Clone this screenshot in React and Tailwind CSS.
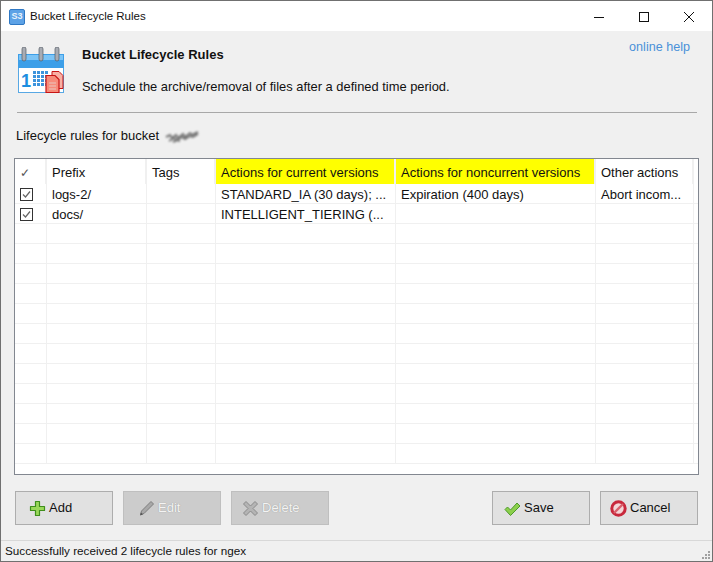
const font = { fontFamily: '"Liberation Sans", Arial, sans-serif' };

const cols = ["w-[32px]", "w-[100px]", "w-[69px]", "w-[180px]", "w-[200px]", "w-[98px]"];

const rows = [
  { prefix: "logs-2/", current: "STANDARD_IA (30 days); ...", noncurrent: "Expiration (400 days)", other: "Abort incom..." },
  { prefix: "docs/", current: "INTELLIGENT_TIERING (..." },
  ...Array(12).fill({ empty: true }),
];

const CalendarIcon = () => (
  <svg width="48" height="48" viewBox="0 0 48 48" className="shrink-0">
    <rect x="1.500" y="7.500" width="45" height="38" fill="#ffffff" stroke="#58a8e4" />
    <rect x="1" y="7" width="46" height="14" fill="#3d9fe8" />
    <rect x="2" y="8" width="44" height="5" fill="#7cc4f6" />
    {[7, 24, 40].map((x) => (
      <rect key={x} x={x - 2} y="0" width="4" height="14" rx="2" fill="#a8acb4" stroke="#555b66" strokeWidth="0.7" />
    ))}
    <text x="4" y="40" fontSize="18" fontWeight="700" fill="#1c8ee0" fontFamily="Liberation Sans">1</text>
    {[0, 1, 2, 3].map((r) =>
      [0, 1, 2, 3].map((c) => <rect key={`${r}${c}`} x={16 + c * 4} y={24 + r * 4} width="3" height="3" fill="#3d94dc" />)
    )}
    <path d="M35 24.500h7l4 4v13H35z" fill="#f8b0a4" stroke="#c81414" strokeWidth="1" />
    <path d="M29 28.500h9l4 4v13H29z" fill="#f78b7a" stroke="#c81414" strokeWidth="1.200" />
    <path d="M32 36h7M32 39h7M32 42h7" stroke="#e8c8c0" strokeWidth="1" />
  </svg>
);

const AppIcon = () => (
  <div className="flex h-[16px] w-[16px] items-center justify-center rounded-[2px] border border-[#2f78c4] bg-[#5da2e6] text-[9px] leading-none font-bold text-[#e8f2fc]">
    S3
  </div>
);

const PlusIcon = () => (
  <svg width="17" height="17" viewBox="0 0 17 17">
    <path d="M6.500 1.500h4v5h5v4h-5v5h-4v-5h-5v-4h5z" fill="#9ad85a" stroke="#3f8f1c" strokeWidth="1.200" strokeLinejoin="round" />
  </svg>
);

const PencilIcon = () => (
  <svg width="17" height="17" viewBox="0 0 17 17">
    <path d="M13 1.500l2.500 2.500-9.500 9.500-3.500 1 1-3.500z" fill="#a8a8a8" stroke="#7e7e7e" />
    <path d="M2 15.500l1-3 2 2z" fill="#555555" />
  </svg>
);

const CrossIcon = () => (
  <svg width="17" height="17" viewBox="0 0 17 17">
    <path d="M4 1.500l4.500 4.500L13 1.500 15.500 4 11 8.500l4.500 4.500-2.500 2.500L8.500 11 4 15.500 1.500 13 6 8.500 1.500 4z" fill="#b4b4b4" stroke="#8a8a8a" />
  </svg>
);

const CheckIcon = () => (
  <svg width="17" height="17" viewBox="0 0 17 17">
    <path d="M1 9.500l2.500-2.500 3 3L13 3l3 3-9.500 9.500z" fill="#8ccf4c" stroke="#4d9a2a" strokeWidth="1" />
  </svg>
);

const NoIcon = () => (
  <svg width="17" height="17" viewBox="0 0 17 17">
    <circle cx="8.500" cy="8.500" r="6.700" fill="#f4d6d8" stroke="#c8283c" strokeWidth="3" />
    <path d="M4 13l9-9" stroke="#d8606c" strokeWidth="2.400" />
  </svg>
);

const Checkbox = () => (
  <div className="mt-[-2px] flex h-[13px] w-[13px] items-center justify-center border border-[#333333] bg-white">
    <svg width="11" height="11" viewBox="0 0 11 11">
      <path d="M2 5.500l2.500 2.500L9 2.500" fill="none" stroke="#666666" strokeWidth="1.200" />
    </svg>
  </div>
);

const Button = ({ icon, label, disabled, inset }) => (
  <button
    className={`flex h-[34px] w-[98px] items-center border text-[13px] ${inset} ${
      disabled ? "border-[#bfbfbf] bg-[#cccccc] text-[#f4f4f4] [text-shadow:0_0_1px_#8a8a8a]" : "border-[#adadad] bg-[#e1e1e1] text-[#111111]"
    }`}
  >
    {icon}
    <span className="ml-[3px]">{label}</span>
  </button>
);

const HeaderCell = ({ width, yellow, last, children }) => (
  <div className={`flex h-[25px] shrink-0 items-center pt-[2px] pl-[5px] text-[13px] whitespace-nowrap ${width} ${yellow ? "bg-[#ffff00]" : ""} ${last ? "" : "border-r-2 border-[#f0f0f0]"}`}>
    {children}
  </div>
);

const Cell = ({ width, children }) => (
  <div className={`flex h-[20px] shrink-0 items-center overflow-hidden border-r border-[#f0f0f0] pt-[2px] pl-[5px] text-[13px] whitespace-nowrap ${width}`}>
    {children}
  </div>
);

export default function App() {
  return (
    <div className="flex h-[562px] w-[713px] flex-col overflow-hidden border border-[#707070] bg-[#f0f0f0] text-[#111111]" style={font}>
      {/* title bar */}
      <div className="flex h-[30px] shrink-0 items-center bg-white pt-[1px] pl-[8px] text-[11.500px]">
        <AppIcon />
        <span className="ml-[5px]">Bucket Lifecycle Rules</span>
        <div className="ml-auto flex items-center pr-[17px]">
          <svg width="12" height="12" viewBox="0 0 12 12"><path d="M1 6.500h10" stroke="#111" /></svg>
          <svg width="12" height="12" viewBox="0 0 12 12" className="ml-[33px]"><rect x="1.500" y="1.500" width="9" height="9" fill="none" stroke="#111" /></svg>
          <svg width="12" height="12" viewBox="0 0 12 12" className="ml-[33px]"><path d="M1 1l10 10M11 1L1 11" stroke="#111" /></svg>
        </div>
      </div>

      {/* header */}
      <div className="flex shrink-0 pt-[16px] pl-[16px]">
        <CalendarIcon />
        <div className="ml-[17px] flex-1">
          <div className="text-[13px] leading-[16px] font-bold">Bucket Lifecycle Rules</div>
          <div className="mt-[16px] text-[12.900px] leading-[16px]">Schedule the archive/removal of files after a defined time period.</div>
        </div>
        <a className="mt-[-8px] mr-[22px] text-[12.600px] leading-[16px] text-[#4a90d9]">online help</a>
      </div>

      <div className="mr-[15px] ml-[16px] mt-[17px] h-px shrink-0 bg-[#a8a8a8]"></div>

      <div className="mt-[15px] ml-[15px] flex h-[16px] shrink-0 items-center text-[13px]">
        Lifecycle rules for bucket
        <svg width="40" height="16" viewBox="0 0 40 16" className="ml-[5px] blur-[1px]">
          <path d="M2 9l4-2 2 3 4-3 2 3 5-4 2 3 5-4 2 2 6-3M5 13l5-3 3 2 5-3 3 2 5-3 3 1 5-3M9 14l4-2 3 1" stroke="#777777" strokeWidth="2" fill="none" />
        </svg>
      </div>

      {/* table */}
      <div className="mx-[13px] mt-[14px] flex h-[317px] shrink-0 flex-col overflow-hidden border border-[#828790] bg-white">
        <div className="flex shrink-0">
          <HeaderCell width={cols[0]}><span className="text-[12px] text-[#555555]">✓</span></HeaderCell>
          <HeaderCell width={cols[1]}>Prefix</HeaderCell>
          <HeaderCell width={cols[2]}>Tags</HeaderCell>
          <HeaderCell width={cols[3]} yellow>Actions for current versions</HeaderCell>
          <HeaderCell width={cols[4]} yellow>Actions for noncurrent versions</HeaderCell>
          <HeaderCell width={cols[5]}>Other actions</HeaderCell>
        </div>
        {rows.map((row, i) => (
          <div key={i} className="flex shrink-0 shadow-[inset_0_-1px_0_#f0f0f0]">
            <Cell width={cols[0]}>{!row.empty && <Checkbox />}</Cell>
            <Cell width={cols[1]}>{row.prefix}</Cell>
            <Cell width={cols[2]}></Cell>
            <Cell width={cols[3]}>{row.current}</Cell>
            <Cell width={cols[4]}>{row.noncurrent}</Cell>
            <Cell width={cols[5]}>{row.other}</Cell>
          </div>
        ))}
      </div>

      {/* buttons */}
      <div className="mx-[14px] mt-[16px] flex shrink-0">
        <Button icon={<PlusIcon />} label="Add" inset="pl-[13px]" />
        <div className="ml-[10px]"><Button icon={<PencilIcon />} label="Edit" disabled inset="pl-[14px]" /></div>
        <div className="ml-[10px]"><Button icon={<CrossIcon />} label="Delete" disabled inset="pl-[10px]" /></div>
        <div className="ml-auto"><Button icon={<CheckIcon />} label="Save" inset="pl-[11px]" /></div>
        <div className="ml-[10px]"><Button icon={<NoIcon />} label="Cancel" inset="pl-[9px]" /></div>
      </div>

      {/* status bar */}
      <div className="relative mt-auto flex h-[21px] shrink-0 items-center border-t border-[#d8d8d8] pl-[4px] text-[11.700px]">
        Successfully received 2 lifecycle rules for ngex
        <div className="absolute right-[2px] bottom-[2px] grid grid-cols-3 gap-[1px]">
          {[0, 0, 1, 0, 1, 1, 1, 1, 1].map((on, i) => (
            <div key={i} className={`h-[2px] w-[2px] ${on ? "bg-[#a0a0a0]" : ""}`}></div>
          ))}
        </div>
      </div>
    </div>
  );
}
